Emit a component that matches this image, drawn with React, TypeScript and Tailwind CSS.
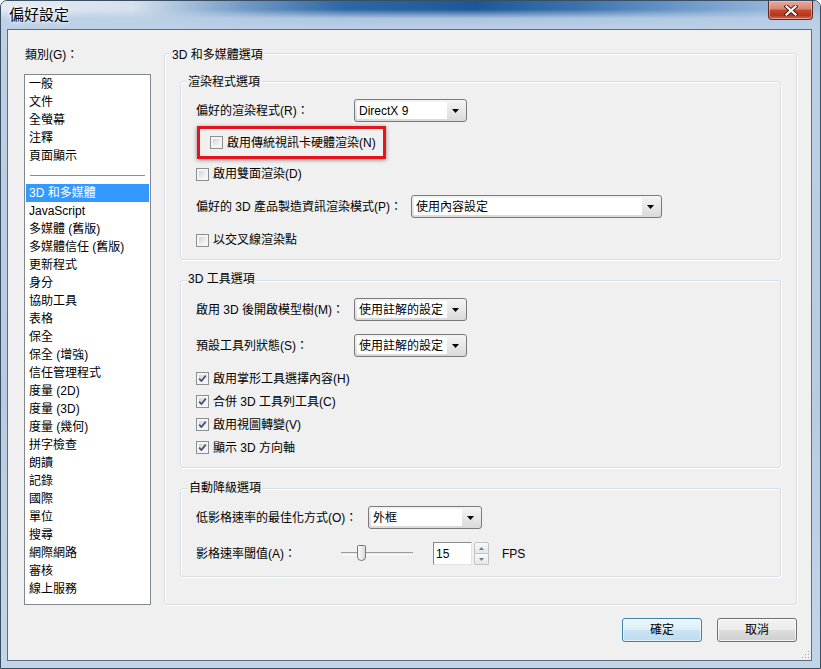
import React from "react";

const categories = [
  "一般",
  "文件",
  "全螢幕",
  "注釋",
  "頁面顯示",
  "-",
  "3D 和多媒體",
  "JavaScript",
  "多媒體 (舊版)",
  "多媒體信任 (舊版)",
  "更新程式",
  "身分",
  "協助工具",
  "表格",
  "保全",
  "保全 (增強)",
  "信任管理程式",
  "度量 (2D)",
  "度量 (3D)",
  "度量 (幾何)",
  "拼字檢查",
  "朗讀",
  "記錄",
  "國際",
  "單位",
  "搜尋",
  "網際網路",
  "審核",
  "線上服務",
];

const Combo = ({ text, className }: { text: string; className: string }) => (
  <div
    className={`flex h-[23px] shrink-0 rounded-[3px] border border-[#7a7a7a] bg-[linear-gradient(180deg,#f4f4f4_0%,#e8e8e8_50%,#d9d9d9_100%)] p-[2px] ${className}`}
  >
    <div className="flex flex-1 items-center bg-white pl-[2px]">{text}</div>
    <div className="flex w-[17px] items-center justify-center">
      <svg width="7" height="4" viewBox="0 0 7 4">
        <path d="M0 0h7L3.5 4z" fill="#000" />
      </svg>
    </div>
  </div>
);

const Check = ({ checked }: { checked?: boolean }) => (
  <span className="flex h-[13px] w-[13px] shrink-0 border border-[#8e8f8f] bg-[#f4f4f4] p-[2px]">
    <span className="relative flex flex-1 items-center justify-center bg-[linear-gradient(135deg,#cfd2d6_0%,#e9eaeb_55%,#f7f7f7_100%)]">
      {checked && (
        <svg width="11" height="11" viewBox="0 0 11 11" className="absolute">
          <path
            d="M2.2 5.6 L4.4 8 L8.8 2.6"
            fill="none"
            stroke="#3b4f7a"
            strokeWidth="1.7"
          />
        </svg>
      )}
    </span>
  </span>
);

const CheckRow = ({
  label,
  checked,
  className,
}: {
  label: string;
  checked?: boolean;
  className: string;
}) => (
  <div className={`flex items-center gap-[4px] ${className}`}>
    <Check checked={checked} />
    <span>{label}</span>
  </div>
);

// group box caption, pulled up over the top border
const Legend = ({ text, className }: { text: string; className: string }) => (
  <div className={`w-fit bg-[#f0f0f0] px-[1px] leading-[16px] ${className}`}>{text}</div>
);

const groupBox =
  "rounded-[3px] border border-[#d5dfe5] shadow-[inset_1px_1px_0_#ffffff,1px_1px_0_#ffffff]";

export default function App() {
  return (
    <div className="h-[669px] w-[821px] bg-white text-[12px] leading-[16px] text-black [font-family:'Liberation_Sans','Noto_Sans_CJK_TC',sans-serif]">
      <div className="flex h-full flex-col rounded-t-[7px] border border-[#3b4d61] bg-[linear-gradient(180deg,#bcd0e6_0%,#b7cce3_60%,#c3d5e8_100%)]">
        {/* title bar */}
        <div className="flex h-[28px] shrink-0 items-start justify-between rounded-t-[6px] bg-[linear-gradient(180deg,rgba(190,210,232,0)_0%,rgba(190,210,232,0)_30%,rgba(186,207,230,0.9)_62%,#bcd0e6_100%),linear-gradient(90deg,#e4ebf3_0%,#d6e1ec_16%,#6f98c4_30%,#2d67a6_42%,#1c5899_58%,#3a72ad_70%,#6f9acb_84%,#a9c4e0_100%)]">
          <span className="pl-[8px] pt-[4px] text-[15px] leading-[20px] [text-shadow:0_0_6px_#ffffff,0_0_3px_#ffffff]">
            偏好設定
          </span>
          <button className="mr-[7px] flex h-[19px] w-[45px] items-center justify-center rounded-b-[4px] border border-t-0 border-[#5c2a22] bg-[linear-gradient(180deg,#e9a99b_0%,#d88572_45%,#c4492f_50%,#b8351d_80%,#d2705a_100%)] shadow-[inset_0_0_0_1px_rgba(255,210,200,0.5)]">
            <svg width="14" height="11" viewBox="0 0 14 11">
              <path
                d="M2.5 1.5 L11.5 9.5 M11.5 1.5 L2.5 9.5"
                stroke="#4a1a12"
                strokeWidth="4"
                strokeLinecap="square"
              />
              <path
                d="M2.5 1.5 L11.5 9.5 M11.5 1.5 L2.5 9.5"
                stroke="#ffffff"
                strokeWidth="2.2"
                strokeLinecap="square"
              />
            </svg>
          </button>
        </div>

        {/* client area */}
        <div className="mb-[7px] ml-[6px] mr-[8px] flex flex-1 flex-col border border-[#5d6d7f] bg-[#f0f0f0] pt-[16px]">
          <div className="flex">
            {/* categories */}
            <div className="ml-[16px] w-[127px] shrink-0">
              <div className="pl-[1px] leading-[18px]">類別(G)：</div>
              <div className="mt-[10px] h-[531px] border border-[#828790] bg-white px-[1px]">
                {categories.map((c, i) =>
                  c === "-" ? (
                    <div key={i} className="h-[19px] px-[4px] pt-[10px]">
                      <div className="h-px bg-[#4a9de6]" />
                    </div>
                  ) : (
                    <div
                      key={i}
                      className={`h-[18px] pl-[3px] leading-[18px] ${
                        c === "3D 和多媒體" ? "bg-[#3399ff] text-white" : ""
                      }`}
                    >
                      {c}
                    </div>
                  )
                )}
              </div>
            </div>

            {/* options */}
            <div className={`ml-[13px] mt-[7px] w-[633px] pb-[8px] ${groupBox}`}>
              <Legend text="3D 和多媒體選項" className="-mt-[7px] ml-[6px]" />

              <div className={`mx-[15px] mt-[18px] pb-[10px] pl-[15px] ${groupBox}`}>
                <Legend text="渲染程式選項" className="-ml-[9px] -mt-[8px]" />
                <div className="mt-[9px] flex items-center">
                  <span className="w-[158px]">偏好的渲染程式(R)：</span>
                  <Combo text="DirectX 9" className="w-[113px]" />
                </div>
                <div className="ml-[1px] mt-[4px] flex h-[33px] w-[189px] items-center gap-[4px] border-[3px] border-[#e3141c] pl-[10px] shadow-[0_1px_4px_rgba(0,0,0,0.45)]">
                  <Check />
                  <span>啟用傳統視訊卡硬體渲染(N)</span>
                </div>
                <CheckRow label="啟用雙面渲染(D)" className="mt-[6px] h-[18px]" />
                <div className="mt-[12px] flex items-center">
                  <span className="w-[215px]">偏好的 3D 產品製造資訊渲染模式(P)：</span>
                  <Combo text="使用內容設定" className="w-[251px]" />
                </div>
                <CheckRow label="以交叉線渲染點" className="mt-[13px] h-[18px]" />
              </div>

              <div className={`mx-[15px] mt-[20px] pb-[8px] pl-[15px] ${groupBox}`}>
                <Legend text="3D 工具選項" className="-ml-[9px] -mt-[10px]" />
                <div className="mt-[11px] flex items-center">
                  <span className="w-[158px]">啟用 3D 後開啟模型樹(M)：</span>
                  <Combo text="使用註解的設定" className="w-[113px]" />
                </div>
                <div className="mt-[13px] flex items-center">
                  <span className="w-[158px]">預設工具列狀態(S)：</span>
                  <Combo text="使用註解的設定" className="w-[113px]" />
                </div>
                <div className="mt-[10px]">
                  <CheckRow label="啟用掌形工具選擇內容(H)" checked className="h-[23px]" />
                  <CheckRow label="合併 3D 工具列工具(C)" checked className="h-[23px]" />
                  <CheckRow label="啟用視圖轉變(V)" checked className="h-[23px]" />
                  <CheckRow label="顯示 3D 方向軸" checked className="h-[23px]" />
                </div>
              </div>

              <div className={`mx-[15px] mt-[20px] pb-[11px] pl-[15px] ${groupBox}`}>
                <Legend text="自動降級選項" className="-ml-[8px] -mt-[9px]" />
                <div className="mt-[10px] flex items-center">
                  <span className="w-[172px]">低影格速率的最佳化方式(O)：</span>
                  <Combo text="外框" className="w-[114px]" />
                </div>
                <div className="mt-[13px] flex h-[23px] items-center">
                  <span className="w-[145px]">影格速率閾值(A)：</span>
                  <div className="relative flex h-[23px] w-[72px] items-center">
                    <div className="h-[3px] w-full border-b border-t border-b-white border-t-[#9c9c9c] bg-[#e3e6e8]" />
                    <svg
                      width="9"
                      height="16"
                      viewBox="0 0 9 16"
                      className="absolute left-[16px] top-[3px]"
                    >
                      <defs>
                        <linearGradient id="th" x1="0" y1="0" x2="1" y2="0">
                          <stop offset="0" stopColor="#fdfdfd" />
                          <stop offset="1" stopColor="#d8d8d8" />
                        </linearGradient>
                      </defs>
                      <path
                        d="M1.5 0.5 H7.5 Q8.5 0.5 8.5 1.5 V12 Q8.5 15.5 4.5 15.5 Q0.5 15.5 0.5 12 V1.5 Q0.5 0.5 1.5 0.5 Z"
                        fill="url(#th)"
                        stroke="#767676"
                      />
                    </svg>
                  </div>
                  <div className="ml-[20px] flex h-[23px] w-[39px] items-center border border-b-[#e3e3e3] border-l-[#8a8a8a] border-r-[#e3e3e3] border-t-[#8a8a8a] bg-white pl-[2px]">
                    15
                  </div>
                  <div className="ml-[2px] flex h-[23px] w-[15px] flex-col">
                    <div className="flex flex-1 items-center justify-center rounded-t-[2px] border border-[#c2c2c2] bg-[linear-gradient(180deg,#fafafa,#e6e6e6)]">
                      <svg width="5" height="3" viewBox="0 0 5 3">
                        <path d="M0 3h5L2.5 0z" fill="#5f7ba6" />
                      </svg>
                    </div>
                    <div className="flex flex-1 items-center justify-center rounded-b-[2px] border border-t-0 border-[#c2c2c2] bg-[linear-gradient(180deg,#fafafa,#e6e6e6)]">
                      <svg width="5" height="3" viewBox="0 0 5 3">
                        <path d="M0 0h5L2.5 3z" fill="#5f7ba6" />
                      </svg>
                    </div>
                  </div>
                  <span className="ml-[13px]">FPS</span>
                </div>
              </div>
            </div>
          </div>

          {/* buttons */}
          <div className="mt-[13px] flex justify-end gap-[15px] pr-[14px]">
            <button className="h-[24px] w-[80px] rounded-[3px] border border-[#3c7fb1] bg-[linear-gradient(180deg,#ecf6fc_0%,#dceef8_50%,#c9e4f3_51%,#bcdcef_100%)] shadow-[inset_0_0_0_1px_rgba(255,255,255,0.6)]">
              確定
            </button>
            <button className="h-[24px] w-[80px] rounded-[3px] border border-[#707070] bg-[linear-gradient(180deg,#f2f2f2_0%,#ebebeb_50%,#dddddd_51%,#cfcfcf_100%)] shadow-[inset_0_0_0_1px_rgba(255,255,255,0.7)]">
              取消
            </button>
          </div>

          {/* size grip */}
          <div className="mt-auto flex justify-end pb-[1px] pr-[1px]">
            <svg width="10" height="10" viewBox="0 0 10 10">
              {[
                [8, 2],
                [5, 5],
                [8, 5],
                [2, 8],
                [5, 8],
                [8, 8],
              ].map(([x, y], i) => (
                <rect key={i} x={x} y={y} width="1" height="1" fill="#a0a0a0" />
              ))}
            </svg>
          </div>
        </div>
      </div>
    </div>
  );
}
